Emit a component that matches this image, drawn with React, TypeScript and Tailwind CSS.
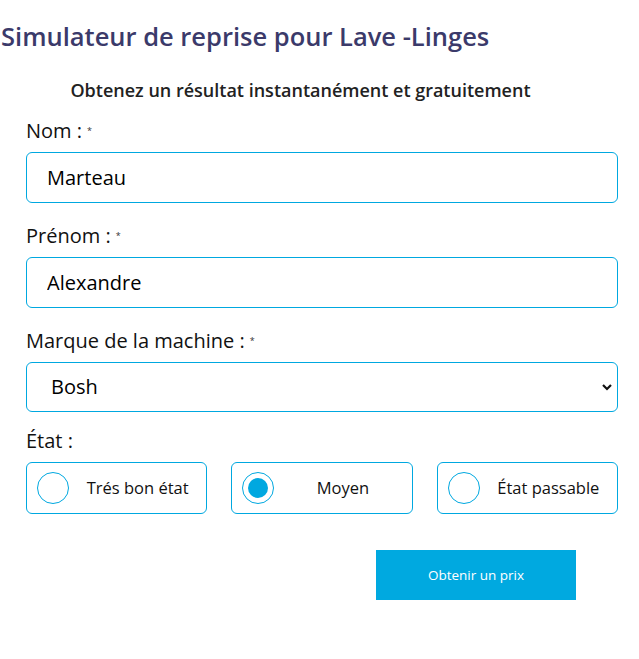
import React, { useState } from "react";

const font = { fontFamily: '"Open Sans", "Noto Sans", sans-serif' };

const Label = ({ text, required }: { text: string; required?: boolean }) => (
  <label className="block text-[20px] text-[#111] leading-[26px] mb-[8px]">
    {text}
    {required && <span className="ml-[5px] align-top text-[9px] text-[#333]">*</span>}
  </label>
);

const states = ["Trés bon état", "Moyen", "État passable"];

export default function App() {
  const [etat, setEtat] = useState("Moyen");

  return (
    <div className="w-[639px] h-[659px] bg-white overflow-hidden" style={font}>
      <h1 className="text-[25.5px] font-semibold leading-[40px] text-[#3b3a6a] pt-[16px] pl-[1px] whitespace-nowrap">
        Simulateur de reprise pour Lave -Linges
      </h1>
      <p className="text-[18px] font-semibold text-[#222] text-center pr-[38px] mt-[21px]">
        Obtenez un résultat instantanément et gratuitement
      </p>

      <form className="ml-[26px] w-[592px] mt-[14px]">
        <Label text="Nom :" required />
        <input
          defaultValue="Marteau"
          className="w-full h-[51px] rounded-[6px] border border-[#00a8e0] px-[20px] text-[20px] text-black outline-none"
        />

        <div className="mt-[20px]">
          <Label text="Prénom :" required />
          <input
            defaultValue="Alexandre"
            className="w-full h-[51px] rounded-[6px] border border-[#00a8e0] px-[20px] text-[20px] text-black outline-none"
          />
        </div>

        <div className="mt-[20px]">
          <Label text="Marque de la machine :" required />
          <div className="relative">
            <select
              defaultValue="Bosh"
              className="w-full h-[50px] appearance-none rounded-[6px] border border-[#00a8e0] px-[24px] text-[20px] text-black outline-none bg-white"
            >
              <option>Bosh</option>
              <option>Samsung</option>
              <option>LG</option>
            </select>
            <svg
              className="absolute right-[6px] top-[21px] pointer-events-none"
              width="10"
              height="8"
              viewBox="0 0 10 8"
            >
              <path d="M1 2 L5 6 L9 2" fill="none" stroke="#111" strokeWidth="2.2" />
            </svg>
          </div>
        </div>

        <div className="mt-[16px]">
          <Label text="État :" />
          <div className="grid grid-cols-3 gap-[24px]">
            {states.map((s) => {
              const on = etat === s;
              return (
                <button
                  type="button"
                  key={s}
                  onClick={() => setEtat(s)}
                  className="h-[52px] rounded-[6px] border border-[#00a8e0] flex items-center pl-[10px] pr-0 bg-white"
                >
                  <span className="w-[32px] h-[32px] rounded-full border border-[#00a8e0] flex items-center justify-center shrink-0">
                    {on && <span className="w-[20px] h-[20px] rounded-full bg-[#00a8e0]" />}
                  </span>
                  <span className="flex-1 text-center text-[16.5px] text-[#111]">{s}</span>
                </button>
              );
            })}
          </div>
        </div>

        <div className="mt-[36px] flex">
          <button
            type="button"
            className="ml-[350px] w-[200px] h-[50px] bg-[#00a9e0] text-white text-[13.5px] font-medium"
          >
            Obtenir un prix
          </button>
        </div>
      </form>
    </div>
  );
}
